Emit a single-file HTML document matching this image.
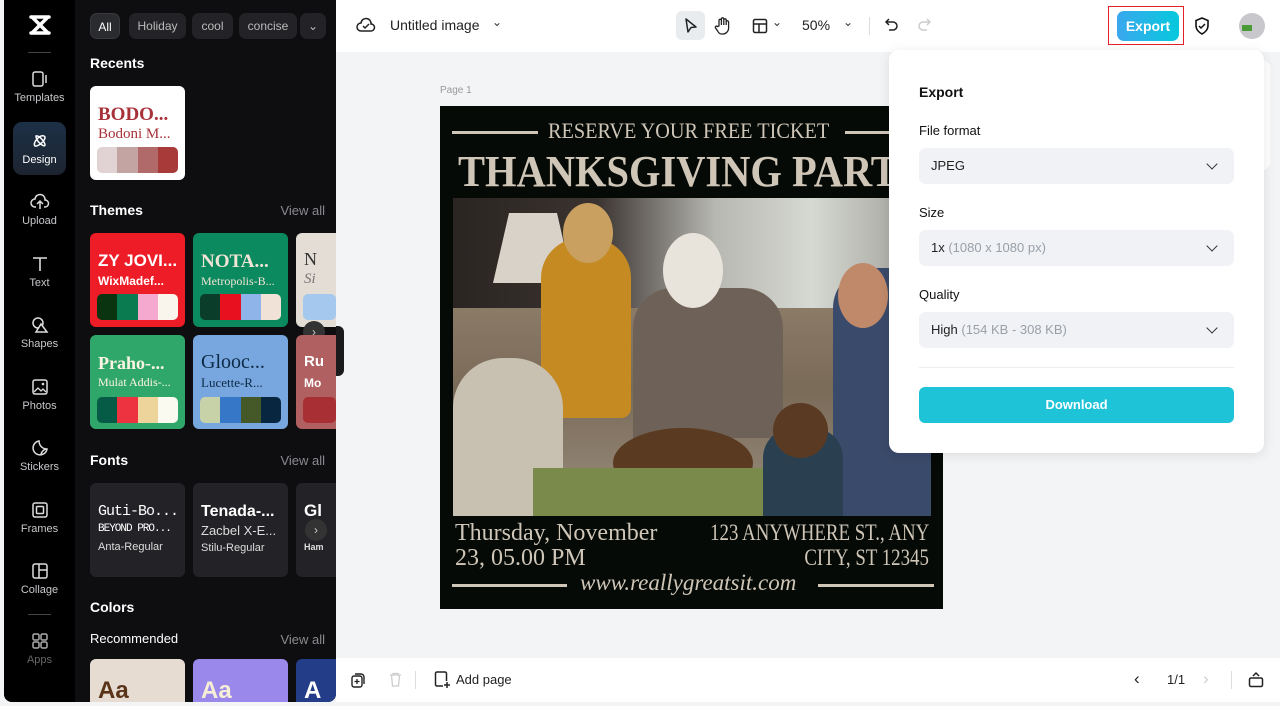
<!DOCTYPE html>
<html><head><meta charset="utf-8">
<style>
*{box-sizing:border-box;margin:0;padding:0}
body{width:1280px;height:706px;overflow:hidden;background:#f2f4f6;font-family:"Liberation Sans",sans-serif;position:relative}
.abs{position:absolute}
.side{left:4px;top:0;width:332px;height:702px;background:#0e0e10;border-radius:0 0 8px 8px;overflow:hidden}
.rail{left:0;top:0;width:71px;height:702px;background:#000}
.ri{position:absolute;left:0;width:71px;text-align:center;color:#c8c8cc;font-size:11px}
.ri svg{display:block;margin:0 auto 4px}
.chip{position:absolute;top:13px;height:26px;border-radius:7px;background:#232327;color:#bbb;font-size:12px;line-height:26px;text-align:center}
.h{position:absolute;color:#fff;font-weight:bold;font-size:14px}
.va{position:absolute;right:11px;color:#8a8a90;font-size:13px}
.card{position:absolute;border-radius:6px;overflow:hidden}
.sw{position:absolute;left:10px;right:10px;height:26px;border-radius:5px;overflow:hidden;display:flex}
.sw i{flex:1}
.t1{position:absolute;left:8px;font-weight:bold;white-space:nowrap}
.top{left:336px;top:0;width:944px;height:52px;background:#fff}
.bot{left:336px;top:658px;width:944px;height:44px;background:#fff}
.pop{left:889px;top:50px;width:375px;height:403px;background:#fff;border-radius:10px;box-shadow:0 2px 12px rgba(0,0,0,.1)}
.lbl{position:absolute;left:30px;font-size:13px;color:#111}
.sel{position:absolute;left:30px;width:315px;height:36px;background:#f0f2f5;border-radius:7px;font-size:13px;line-height:36px;padding-left:12px;color:#222}
.sel span{color:#9aa0a8}
.sel:after{content:"";position:absolute;right:18px;top:12px;width:7px;height:7px;border-right:1.6px solid #333;border-bottom:1.6px solid #333;transform:rotate(45deg)}
.pt{color:#cfc6b8;font-family:"Liberation Serif",serif;position:absolute;white-space:nowrap}
</style></head><body>

<div class="abs side">
 <div class="abs rail">
  <div class="ri" style="top:14px"><svg width="26" height="22" viewBox="0 0 26 22"><g stroke="#fff" stroke-width="3.5" fill="none" stroke-linecap="round"><path d="M4 3h18M4 19h18M6 4l14 14M20 4L6 18"/></g></svg></div>
  <div style="position:absolute;left:24px;top:52px;width:23px;height:1px;background:#444"></div>
  <div class="ri" style="top:70px"><svg width="18" height="18" viewBox="0 0 18 18"><rect x="2" y="2" width="10" height="14" rx="2" stroke="#ddd" stroke-width="1.5" fill="none"/><path d="M15 5v8" stroke="#ddd" stroke-width="1.5"/></svg>Templates</div>
  <div style="position:absolute;left:9px;top:122px;width:53px;height:53px;border-radius:9px;background:linear-gradient(#1c3046,#1d2430)"></div>
  <div class="ri" style="top:132px;color:#fff"><svg width="18" height="18" viewBox="0 0 18 18"><path d="M4 14c-3-3 5-12 9-10s-5 11-9 10zM5 4c3-1 9 6 9 9s-9-3-9-9z" stroke="#fff" stroke-width="1.5" fill="none"/></svg>Design</div>
  <div class="ri" style="top:193px"><svg width="20" height="18" viewBox="0 0 20 18"><path d="M6 14H5a4 4 0 0 1 0-8 5 5 0 0 1 10 1 3.5 3.5 0 0 1 0 7h-1M10 16V9M7 11l3-3 3 3" stroke="#ddd" stroke-width="1.5" fill="none"/></svg>Upload</div>
  <div class="ri" style="top:255px"><svg width="18" height="18" viewBox="0 0 18 18"><path d="M2 3h14M9 3v13" stroke="#ddd" stroke-width="1.6" fill="none"/></svg>Text</div>
  <div class="ri" style="top:316px"><svg width="18" height="18" viewBox="0 0 18 18"><circle cx="7" cy="7" r="5" stroke="#ddd" stroke-width="1.5" fill="none"/><path d="M10 8l6 8H5z" stroke="#ddd" stroke-width="1.5" fill="#000"/></svg>Shapes</div>
  <div class="ri" style="top:378px"><svg width="18" height="18" viewBox="0 0 18 18"><rect x="2" y="2" width="14" height="14" rx="2" stroke="#ddd" stroke-width="1.5" fill="none"/><path d="M3 14l4-4 3 3 2-2 3 3" stroke="#ddd" stroke-width="1.3" fill="none"/><circle cx="12" cy="6" r="1.3" fill="#ddd"/></svg>Photos</div>
  <div class="ri" style="top:439px"><svg width="18" height="18" viewBox="0 0 18 18"><path d="M16 10a7 7 0 1 1-8-8c0 4 3 8 8 8zM16 10c-3 0-6 3-6 6" stroke="#ddd" stroke-width="1.5" fill="none"/></svg>Stickers</div>
  <div class="ri" style="top:501px"><svg width="18" height="18" viewBox="0 0 18 18"><rect x="2" y="2" width="14" height="14" rx="2" stroke="#ddd" stroke-width="1.5" fill="none"/><rect x="5.5" y="5.5" width="7" height="7" rx="1" stroke="#ddd" stroke-width="1.5" fill="none"/></svg>Frames</div>
  <div class="ri" style="top:562px"><svg width="18" height="18" viewBox="0 0 18 18"><rect x="2" y="2" width="14" height="14" rx="2" stroke="#ddd" stroke-width="1.5" fill="none"/><path d="M8 2v14M8 8h8" stroke="#ddd" stroke-width="1.5"/></svg>Collage</div>
  <div style="position:absolute;left:24px;top:614px;width:23px;height:1px;background:#444"></div>
  <div class="ri" style="top:632px;color:#666"><svg width="18" height="18" viewBox="0 0 18 18"><g stroke="#aaa" stroke-width="1.5" fill="none"><rect x="2" y="2" width="6" height="6" rx="1.5"/><rect x="10" y="2" width="6" height="6" rx="1.5"/><rect x="2" y="10" width="6" height="6" rx="1.5"/><rect x="10" y="10" width="6" height="6" rx="1.5"/></g></svg>Apps</div>
 </div>
 <div class="chip" style="left:86px;width:30px;background:#2a2b2f;color:#fff;border:1px solid #3a3a3e">All</div>
 <div class="chip" style="left:125px;width:57px">Holiday</div>
 <div class="chip" style="left:188px;width:41px">cool</div>
 <div class="chip" style="left:235px;width:58px">concise</div>
 <div class="chip" style="left:296px;width:26px">⌄</div>
 <div class="h" style="left:86px;top:55px">Recents</div>
 <div class="card" style="left:86px;top:86px;width:95px;height:94px;background:#fff">
  <div class="t1" style="top:18px;color:#a8323a;font-family:'Liberation Serif',serif;font-size:19px">BODO...</div>
  <div class="t1" style="top:40px;color:#a8323a;font-family:'Liberation Serif',serif;font-size:15px;font-weight:normal">Bodoni M...</div>
  <div class="sw" style="left:7px;right:7px;top:61px"><i style="background:#e1d3d3"></i><i style="background:#c4a3a3"></i><i style="background:#b06a6a"></i><i style="background:#a83a3a"></i></div>
 </div>
 <div class="h" style="left:86px;top:202px">Themes</div><div class="va" style="top:203px">View all</div>
 <div class="card" style="left:86px;top:233px;width:95px;height:94px;background:#ee1c27">
  <div class="t1" style="top:18px;color:#fff;font-size:17px">ZY JOVI...</div><div class="t1" style="top:41px;color:#fff;font-size:12px">WixMadef...</div>
  <div class="sw" style="left:7px;right:7px;top:61px"><i style="background:#0a3310"></i><i style="background:#0a7a50"></i><i style="background:#f6a9ce"></i><i style="background:#faf5ec"></i></div></div>
 <div class="card" style="left:189px;top:233px;width:95px;height:94px;background:#0a8a5e">
  <div class="t1" style="top:18px;color:#f2e4d6;font-family:'Liberation Serif',serif;font-size:19px">NOTA...</div><div class="t1" style="top:41px;color:#f2e4d6;font-family:'Liberation Serif',serif;font-size:12px;font-weight:normal">Metropolis-B...</div>
  <div class="sw" style="left:7px;right:7px;top:61px"><i style="background:#0a3d2a"></i><i style="background:#e8101e"></i><i style="background:#8fb4ea"></i><i style="background:#f1e2d8"></i></div></div>
 <div class="card" style="left:292px;top:233px;width:40px;height:94px;background:#e4ddd5;border-radius:6px 0 0 6px"><div class="t1" style="top:16px;color:#333;font-family:'Liberation Serif',serif;font-size:18px;font-weight:normal">N</div><div class="t1" style="top:38px;color:#777;font-family:'Liberation Serif',serif;font-size:15px;font-weight:normal;font-style:italic">Si</div><div class="sw" style="left:7px;right:0;top:61px"><i style="background:#a4c8ee"></i></div></div>
 <div class="abs" style="left:299px;top:321px;width:22px;height:22px;border-radius:50%;background:#333;color:#ccc;font-size:12px;text-align:center;line-height:22px">›</div>
 <div class="card" style="left:86px;top:335px;width:95px;height:94px;background:#30a76a">
  <div class="t1" style="top:18px;color:#fdf5e0;font-family:'Liberation Serif',serif;font-size:18px">Praho-...</div><div class="t1" style="top:40px;color:#fdf5e0;font-family:'Liberation Serif',serif;font-size:12px;font-weight:normal">Mulat Addis-...</div>
  <div class="sw" style="left:7px;right:7px;top:62px"><i style="background:#055b45"></i><i style="background:#ee3340"></i><i style="background:#ecd49a"></i><i style="background:#fafaf0"></i></div></div>
 <div class="card" style="left:189px;top:335px;width:95px;height:94px;background:#78a6de">
  <div class="t1" style="top:16px;color:#0c2a45;font-family:'Liberation Serif',serif;font-size:20px;font-weight:normal">Glooc...</div><div class="t1" style="top:40px;color:#0c2a45;font-family:'Liberation Serif',serif;font-size:13px;font-weight:normal">Lucette-R...</div>
  <div class="sw" style="left:7px;right:7px;top:62px"><i style="background:#c8d2a8"></i><i style="background:#3777c8"></i><i style="background:#455828"></i><i style="background:#082640"></i></div></div>
 <div class="card" style="left:292px;top:335px;width:40px;height:94px;background:#b06060;border-radius:6px 0 0 6px"><div class="t1" style="top:18px;color:#fff;font-size:15px">Ru</div><div class="t1" style="top:41px;color:#fff;font-size:12px">Mo</div><div class="sw" style="left:7px;right:0;top:62px"><i style="background:#a83034"></i></div></div>
 <div class="h" style="left:86px;top:452px">Fonts</div><div class="va" style="top:453px">View all</div>
 <div class="card" style="left:86px;top:483px;width:95px;height:94px;background:#232327">
  <div class="t1" style="top:20px;color:#fff;font-family:'Liberation Mono',monospace;font-size:15px;font-weight:normal;letter-spacing:-1px">Guti-Bo...</div><div class="t1" style="top:40px;color:#fff;font-family:'Liberation Mono',monospace;font-size:11px;font-weight:normal;letter-spacing:-1px">BEYOND PRO...</div><div class="t1" style="top:58px;color:#ddd;font-size:11px;font-weight:normal">Anta-Regular</div></div>
 <div class="card" style="left:189px;top:483px;width:95px;height:94px;background:#232327">
  <div class="t1" style="top:20px;color:#fff;font-size:16px">Tenada-...</div><div class="t1" style="top:40px;color:#ddd;font-size:13px;font-weight:normal">Zacbel X-E...</div><div class="t1" style="top:59px;color:#ddd;font-size:11px;font-weight:normal">Stilu-Regular</div></div>
 <div class="card" style="left:292px;top:483px;width:40px;height:94px;background:#232327;border-radius:6px 0 0 6px"><div class="t1" style="top:18px;color:#fff;font-size:17px">Gl</div><div class="t1" style="top:59px;color:#ddd;font-size:9px">Ham</div></div>
 <div class="abs" style="left:301px;top:519px;width:22px;height:22px;border-radius:50%;background:#333;color:#ccc;font-size:12px;text-align:center;line-height:22px">›</div>
 <div class="h" style="left:86px;top:599px">Colors</div>
 <div class="abs" style="left:86px;top:631px;color:#fff;font-size:13px">Recommended</div><div class="va" style="top:632px">View all</div>
 <div class="card" style="left:86px;top:659px;width:95px;height:60px;background:#e6dcd2"><div class="t1" style="top:18px;color:#5a3418;font-size:24px">Aa</div></div>
 <div class="card" style="left:189px;top:659px;width:95px;height:60px;background:#9a88ea"><div class="t1" style="top:18px;color:#f6eed6;font-size:24px">Aa</div></div>
 <div class="card" style="left:292px;top:659px;width:40px;height:60px;background:#243d88;border-radius:6px 0 0 0"><div class="t1" style="top:18px;color:#fff;font-size:24px">A</div></div>
</div>
<div class="abs" style="left:336px;top:326px;width:8px;height:50px;background:#1a1a1c;border-radius:0 6px 6px 0"></div>

<div class="abs top">
 <svg class="abs" style="left:20px;top:16px" width="20" height="18" viewBox="0 0 20 18"><path d="M6 15H5a4 4 0 0 1 0-8 5 5 0 0 1 10 1 3.5 3.5 0 0 1 0 7H6zM7 10l2 2 4-4" stroke="#222" stroke-width="1.5" fill="none"/></svg>
 <div class="abs" style="left:54px;top:17px;font-size:14px;color:#222">Untitled image</div>
 <div class="abs" style="left:156px;top:15px;font-size:12px;color:#333">⌄</div>
 <div class="abs" style="left:340px;top:11px;width:29px;height:29px;border-radius:6px;background:#e8ecef"></div>
 <svg class="abs" style="left:347px;top:17px" width="16" height="18" viewBox="0 0 16 18"><path d="M3 2l10 8-5 .5L5 15z" stroke="#222" stroke-width="1.5" fill="none" stroke-linejoin="round"/></svg>
 <svg class="abs" style="left:378px;top:16px" width="18" height="19" viewBox="0 0 18 19"><path d="M5 10V4.5a1.2 1.2 0 0 1 2.4 0V9V3a1.2 1.2 0 0 1 2.4 0v6V4a1.2 1.2 0 0 1 2.4 0v5V6a1.2 1.2 0 0 1 2.4 0v6a6 6 0 0 1-6 6h-1c-2 0-3-1-4-3l-2-3a1.2 1.2 0 0 1 2-1.4z" stroke="#222" stroke-width="1.3" fill="none"/></svg>
 <svg class="abs" style="left:416px;top:18px" width="16" height="16" viewBox="0 0 16 16"><rect x="1.5" y="1.5" width="13" height="13" rx="1.5" stroke="#222" stroke-width="1.5" fill="none"/><path d="M1.5 6h13M7 6v8.5" stroke="#222" stroke-width="1.5"/></svg>
 <div class="abs" style="left:436px;top:15px;font-size:12px;color:#333">⌄</div>
 <div class="abs" style="left:466px;top:17px;font-size:14px;color:#222">50%</div>
 <div class="abs" style="left:507px;top:15px;font-size:12px;color:#333">⌄</div>
 <div class="abs" style="left:533px;top:17px;width:1px;height:18px;background:#ddd"></div>
 <svg class="abs" style="left:548px;top:17px" width="16" height="16" viewBox="0 0 16 16"><path d="M5 2L2 5l3 3M2 5h7a4 4 0 0 1 0 8H5" stroke="#222" stroke-width="1.5" fill="none"/></svg>
 <svg class="abs" style="left:580px;top:17px" width="16" height="16" viewBox="0 0 16 16"><path d="M11 2l3 3-3 3M14 5H7a4 4 0 0 0 0 8h4" stroke="#ccc" stroke-width="1.5" fill="none"/></svg>
 <div class="abs" style="left:772px;top:6px;width:76px;height:39px;border:1.5px solid #e4202a"></div>
 <div class="abs" style="left:781px;top:11px;width:62px;height:30px;border-radius:7px;background:linear-gradient(90deg,#3aa8ee,#06c8dc);color:#fff;font-size:14px;font-weight:bold;text-align:center;line-height:30px">Export</div>
 <svg class="abs" style="left:857px;top:16px" width="18" height="20" viewBox="0 0 18 20"><path d="M9 2l6 2.5v5c0 4-3 7-6 8.5-3-1.5-6-4.5-6-8.5v-5z" stroke="#111" stroke-width="1.6" fill="none"/><path d="M6 10l2 2 4-4" stroke="#111" stroke-width="1.5" fill="none"/></svg>
 <div class="abs" style="left:903px;top:13px;width:26px;height:26px;border-radius:50%;background:#c8c8cc;overflow:hidden"><div style="position:absolute;left:3px;top:12px;width:10px;height:6px;background:#4a9a3a"></div></div>
</div>

<div class="abs" style="left:440px;top:85px;font-size:10px;color:#999">Page 1</div>
<div class="abs" style="left:440px;top:106px;width:503px;height:503px;background:#050a06;overflow:hidden">
 <div class="abs" style="left:12px;top:25px;width:86px;height:3px;background:#cfc6b8"></div>
 <div class="abs" style="left:405px;top:25px;width:90px;height:3px;background:#cfc6b8"></div>
 <div class="pt" style="left:108px;top:12px;font-size:22px;transform:scaleX(.92);transform-origin:left">RESERVE YOUR FREE TICKET</div>
 <div class="pt" style="left:18px;top:40px;font-size:44px;font-weight:bold;transform:scaleX(.92);transform-origin:left">THANKSGIVING PARTY</div>
 <div class="abs" style="left:13px;top:92px;width:478px;height:318px;background:linear-gradient(180deg,#6c6258 0%,#8a7a66 35%,#7a6a58 60%,#9a8e7e 100%)">
  <div class="abs" style="left:0;top:0;width:478px;height:110px;background:linear-gradient(90deg,#2a2522 0%,#3a3330 30%,#b8b8b2 55%,#d6d8d2 75%,#9a9a94 100%)"></div>
  <div class="abs" style="left:40px;top:15px;width:80px;height:70px;background:#d8d2c8;clip-path:polygon(20% 0,80% 0,100% 100%,0 100%)"></div>
  <div class="abs" style="left:88px;top:40px;width:90px;height:180px;background:#c58a22;border-radius:40px 40px 10px 10px"></div>
  <div class="abs" style="left:110px;top:5px;width:50px;height:60px;background:#c9a060;border-radius:50%"></div>
  <div class="abs" style="left:180px;top:90px;width:150px;height:150px;background:#6e6258;border-radius:40px 40px 0 0"></div>
  <div class="abs" style="left:210px;top:35px;width:60px;height:75px;background:#e8e4dc;border-radius:50%"></div>
  <div class="abs" style="left:380px;top:70px;width:98px;height:248px;background:#3a4a6a;border-radius:40px 0 0 0"></div>
  <div class="abs" style="left:385px;top:65px;width:50px;height:65px;background:#c08a6a;border-radius:50%"></div>
  <div class="abs" style="left:0;top:160px;width:110px;height:158px;background:#c8c0b0;border-radius:50px 50px 0 0"></div>
  <div class="abs" style="left:160px;top:230px;width:140px;height:70px;background:#5a3a20;border-radius:50%"></div>
  <div class="abs" style="left:80px;top:270px;width:280px;height:48px;background:#7a8a4a"></div>
  <div class="abs" style="left:310px;top:230px;width:80px;height:88px;background:#2a4050;border-radius:30px 30px 0 0"></div>
  <div class="abs" style="left:320px;top:205px;width:55px;height:55px;background:#5a3a22;border-radius:50%"></div>
 </div>
 <div class="pt" style="left:15px;top:414px;font-size:24px">Thursday, November</div>
 <div class="pt" style="left:15px;top:439px;font-size:24px">23, 05.00 PM</div>
 <div class="pt" style="right:14px;top:414px;font-size:23px;transform:scaleX(.82);transform-origin:right">123 ANYWHERE ST., ANY</div>
 <div class="pt" style="right:14px;top:439px;font-size:23px;transform:scaleX(.82);transform-origin:right">CITY, ST 12345</div>
 <div class="abs" style="left:12px;top:478px;width:115px;height:3px;background:#cfc6b8"></div>
 <div class="abs" style="left:378px;top:478px;width:116px;height:3px;background:#cfc6b8"></div>
 <div class="pt" style="left:140px;top:464px;font-size:23px;font-style:italic">www.reallygreatsit.com</div>
</div>

<div class="abs" style="left:1250px;top:60px;width:20px;height:110px;background:#fff;border-radius:8px"></div>
<div class="abs pop">
 <div class="abs" style="left:30px;top:34px;font-size:14px;font-weight:bold;color:#111">Export</div>
 <div class="lbl" style="top:73px">File format</div>
 <div class="sel" style="top:98px">JPEG</div>
 <div class="lbl" style="top:155px">Size</div>
 <div class="sel" style="top:180px">1x <span>(1080 x 1080 px)</span></div>
 <div class="lbl" style="top:237px">Quality</div>
 <div class="sel" style="top:262px">High <span>(154 KB - 308 KB)</span></div>
 <div class="abs" style="left:30px;top:317px;width:315px;height:1px;background:#eceef0"></div>
 <div class="abs" style="left:30px;top:337px;width:315px;height:36px;border-radius:6px;background:#1fc3d8;color:#fff;font-size:13px;font-weight:bold;text-align:center;line-height:36px">Download</div>
</div>

<div class="abs bot">
 <svg class="abs" style="left:15px;top:14px" width="14" height="16" viewBox="0 0 14 16"><rect x="1" y="4" width="10" height="11" rx="2" stroke="#222" stroke-width="1.4" fill="none"/><path d="M4 2h6a3 3 0 0 1 3 3v7" stroke="#222" stroke-width="1.4" fill="none"/><path d="M6 7v5M3.5 9.5h5" stroke="#222" stroke-width="1.3"/></svg>
 <svg class="abs" style="left:53px;top:14px" width="13" height="15" viewBox="0 0 13 15"><path d="M1 3h11M4 3V1.5h5V3M2.5 3l1 11h6l1-11" stroke="#ccc" stroke-width="1.3" fill="none"/></svg>
 <div class="abs" style="left:79px;top:13px;width:1px;height:18px;background:#ddd"></div>
 <svg class="abs" style="left:98px;top:13px" width="17" height="18" viewBox="0 0 17 18"><path d="M9 15H3a1.5 1.5 0 0 1-1.5-1.5v-11A1.5 1.5 0 0 1 3 1h8a1.5 1.5 0 0 1 1.5 1.5V10M13 11v6M10 14h6" stroke="#222" stroke-width="1.5" fill="none"/></svg>
 <div class="abs" style="left:120px;top:14px;font-size:13px;color:#222">Add page</div>
 <div class="abs" style="left:798px;top:11px;font-size:17px;color:#222">‹</div>
 <div class="abs" style="left:831px;top:14px;font-size:13px;color:#222">1/1</div>
 <div class="abs" style="left:867px;top:11px;font-size:17px;color:#ccc">›</div>
 <div class="abs" style="left:895px;top:13px;width:1px;height:18px;background:#ddd"></div>
 <svg class="abs" style="left:912px;top:12px" width="16" height="18" viewBox="0 0 16 18"><rect x="1.5" y="8" width="13" height="8.5" rx="1.5" stroke="#222" stroke-width="1.5" fill="none"/><path d="M5 6l3-3 3 3" stroke="#222" stroke-width="1.5" fill="none"/></svg>
</div>
</body></html>
